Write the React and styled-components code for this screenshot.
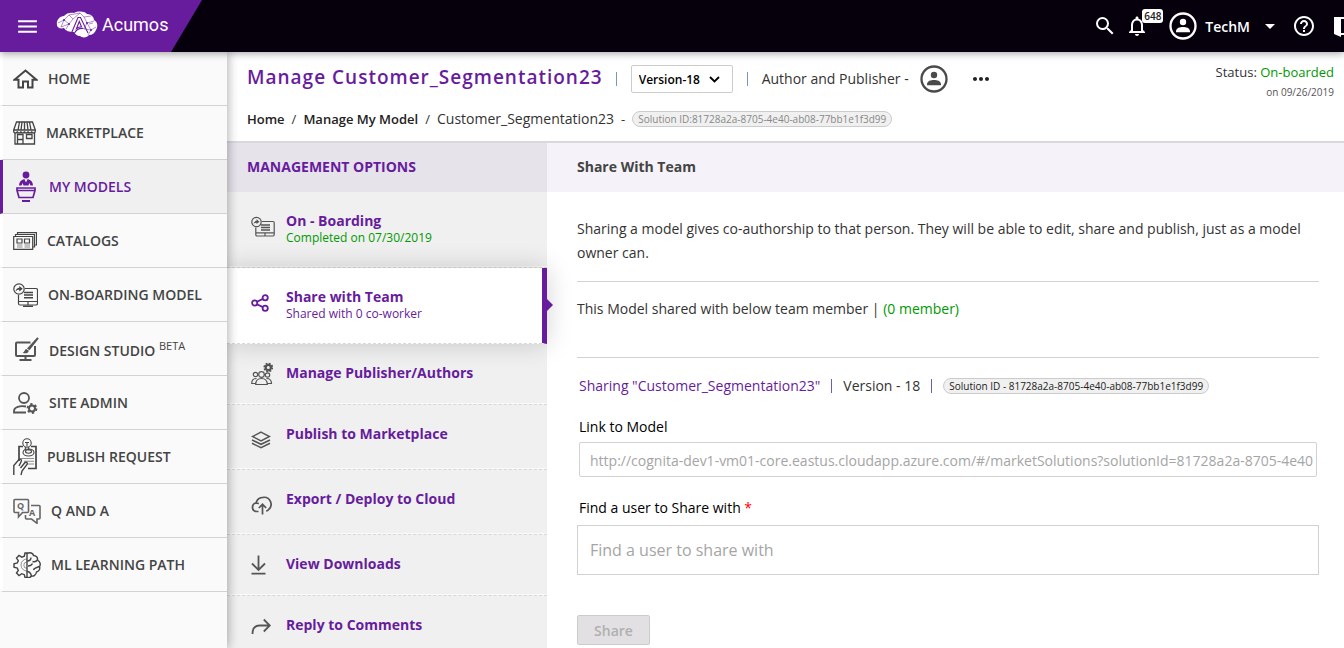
import React from "react";
import styled, { createGlobalStyle, css } from "styled-components";
import {
  MdMenu,
  MdSearch,
  MdNotificationsNone,
  MdArrowDropDown,
  MdHelpOutline,
  MdMoreHoriz,
} from "react-icons/md";

const purple = "#671c9d";
const green = "#009901";
const line = "#d2d2d2";

const GlobalStyle = createGlobalStyle`
  *, *::before, *::after { box-sizing: border-box; }
  body {
    margin: 0;
    background: #fff;
    color: #333;
    font-family: "Open Sans", "Noto Sans", sans-serif;
    font-size: 14px;
    line-height: 20px;
  }
  a { color: inherit; text-decoration: none; }
  ul, ol, h1, h2, p { margin: 0; padding: 0; }
  ul, ol { list-style: none; }
  button, input, select { font-family: inherit; }
  svg { display: block; flex: none; }
`;

const Page = styled.div`
  display: flex;
  flex-direction: column;
  height: 100vh;
  overflow: hidden;
`;

/* ---------- top bar ---------- */

const TopBar = styled.header`
  flex: none;
  display: flex;
  justify-content: space-between;
  height: 52px;
  background: #05000c;
  color: #fff;
  overflow: hidden;
`;

const TopBarShadow = styled.div`
  position: relative;
  z-index: 3;
  flex: none;
  box-shadow: 0 1px 8px rgba(0, 0, 0, 0.4);
`;

const Brand = styled.div`
  display: flex;
  align-items: center;
  gap: 16px;
  width: 202px;
  padding-left: 15px;
  background: ${purple};
  clip-path: polygon(0 0, 100% 0, 171px 100%, 0 100%);
`;

const IconButton = styled.button`
  display: flex;
  align-items: center;
  padding: 0;
  border: 0;
  background: none;
  color: inherit;
`;

const BrandLink = styled.a`
  display: flex;
  align-items: center;
  gap: 4px;
  padding-bottom: 3px;
  font-family: Roboto, sans-serif;
  font-size: 18px;
  line-height: 24px;
`;

const UserTools = styled.nav`
  display: flex;
  align-items: center;
  gap: 8px;
  margin-right: -14px;
`;

const Bell = styled(IconButton)`
  position: relative;
  margin-right: 12px;
`;

const Count = styled.span`
  position: absolute;
  left: 17px;
  top: -5px;
  padding: 0 2px;
  border-radius: 3px;
  background: #fff;
  color: #222;
  font-size: 10px;
  font-weight: 600;
  line-height: 14px;
`;

const UserMenu = styled(IconButton)`
  gap: 8px;
  margin-right: 2px;
  font-size: 14px;
  font-weight: 600;
`;

const Exit = styled(IconButton)`
  margin-left: 10px;
`;

/* ---------- side bar ---------- */

const Shell = styled.div`
  flex: 1;
  display: flex;
  min-height: 0;
`;

const SideBar = styled.nav`
  position: relative;
  z-index: 2;
  flex: none;
  width: 227px;
  background: #fafafa;
  box-shadow: 1px 0 10px rgba(0, 0, 0, 0.32);
`;

const SideLink = styled.a`
  display: flex;
  align-items: center;
  gap: 10px;
  height: 54px;
  padding-left: 10px;
  border-left: 3px solid #fff;
  border-bottom: 1px solid ${line};
  color: #444;
  font-weight: 600;
  ${(p) =>
    p.$active &&
    css`
      background: #f0f0f0;
      border-left-color: ${purple};
      color: ${purple};
    `}
`;

const Beta = styled.sup`
  font-size: 11px;
  font-weight: 400;
  line-height: 20px;
`;

/* ---------- page head ---------- */

const Content = styled.div`
  flex: 1;
  display: flex;
  flex-direction: column;
  min-width: 0;
`;

const PageHead = styled.div`
  flex: none;
  display: flex;
  justify-content: space-between;
  height: 91px;
  padding: 10px 10px 0 20px;
  border-bottom: 2px solid #dad7df;
`;

const TitleRow = styled.div`
  display: flex;
  align-items: center;
  height: 34px;
  gap: 14px;
`;

const Title = styled.h1`
  margin-right: -1px;
  padding-bottom: 4px;
  color: ${purple};
  font-size: 19px;
  font-weight: 600;
  letter-spacing: 1px;
  line-height: 28px;
`;

const Bar = styled.span`
  width: 1px;
  height: 14px;
  background: ${(p) => p.$color || "#7a96c0"};
`;

const SelectBox = styled.div`
  display: grid;
  align-items: center;
  width: 102px;
  & > * { grid-area: 1 / 1; }
  & > svg { justify-self: end; margin-right: 13px; pointer-events: none; }
`;

const VersionSelect = styled.select`
  appearance: none;
  width: 100%;
  height: 28px;
  padding: 0 7px;
  border: 1px solid #ccc;
  border-radius: 2px;
  background: #fff;
  color: #000;
  font-size: 12px;
  font-weight: 600;
`;

const Role = styled.div`
  display: flex;
  align-items: center;
  gap: 11px;
  color: #333;
  & > svg { color: #4a4a4a; }
`;

const More = styled(IconButton)`
  margin-left: 7px;
  color: #222;
`;

const Crumbs = styled.ol`
  display: flex;
  align-items: center;
  gap: 7px;
  margin-top: 13px;
  font-size: 13px;
  color: #333;
  a { font-weight: 600; color: #222; }
`;

const Current = styled.span`
  font-size: 14px;
`;

const Pill = styled.span`
  padding: 0 5px;
  border: 1px solid #ccc;
  border-radius: 8px;
  background: #f0f0f0;
  color: ${(p) => (p.$dark ? "#222" : "#888")};
  font-size: 10px;
  line-height: 14px;
`;

const Status = styled.div`
  text-align: right;
  font-size: 13px;
`;

const Done = styled.span`
  color: ${green};
`;

const StatusDate = styled.div`
  font-size: 10px;
  color: #555;
`;

/* ---------- management options ---------- */

const Columns = styled.div`
  flex: 1;
  display: flex;
  min-height: 0;
`;

const Options = styled.section`
  flex: none;
  width: 320px;
  background: #f0f0f0;
`;

const PanelHead = styled.h2`
  height: 49px;
  padding: 14px 20px 0;
  background: #e6e3ea;
  color: ${purple};
  font-size: 14px;
  font-weight: 700;
  line-height: 20px;
`;

const Option = styled.a`
  position: relative;
  display: flex;
  align-items: flex-start;
  min-height: ${(p) => p.$height}px;
  padding: 19px 0 0 24px;
  border-bottom: 1px dashed #d8d8d8;
  box-shadow: inset 0 -1px 0 #fafafa;
  color: ${purple};
  ${(p) =>
    p.$active &&
    css`
      z-index: 1;
      background: #fff;
      border-right: 5px solid ${purple};
      box-shadow: 0 0 24px rgba(0, 0, 0, 0.18);
      &::after {
        content: "";
        position: absolute;
        right: -11px;
        top: 31px;
        border: 6px solid transparent;
        border-left-color: ${purple};
        border-right: 0;
      }
    `}
`;

const OptionIcon = styled.span`
  display: flex;
  align-items: center;
  flex: none;
  width: 35px;
  height: ${(p) => (p.$tall ? 32 : 22)}px;
  color: ${(p) => (p.$active ? purple : "#555")};
`;

const OptionText = styled.span`
  display: flex;
  flex-direction: column;
  font-weight: 700;
`;

const Note = styled.span`
  color: ${(p) => (p.$done ? green : purple)};
  font-size: 12px;
  font-weight: 400;
  line-height: 14px;
`;

/* ---------- share panel ---------- */

const Share = styled.main`
  flex: 1;
  min-width: 0;
`;

const ShareHead = styled(PanelHead)`
  padding-left: 30px;
  background: #f5f2fa;
  color: #444;
`;

const ShareBody = styled.form`
  padding: 25px 25px 0 30px;
`;

const Block = styled.p`
  min-height: ${(p) => p.$height || 0}px;
  padding-bottom: 16px;
  border-bottom: 1px solid ${line};
  line-height: 24px;
`;

const Members = styled(Block)`
  padding-top: 15px;
`;

const Sharing = styled.div`
  display: flex;
  align-items: center;
  gap: 11px;
  margin: 18px 2px 0;
`;

const SharingName = styled.span`
  color: ${purple};
`;

const Field = styled.div`
  display: flex;
  flex-direction: column;
  margin: ${(p) => (p.$inset ? "21px 2px 0" : "21px 0 0")};
`;

const Label = styled.label`
  padding-left: ${(p) => p.$indent || 0}px;
  color: #000;
`;

const Required = styled.span`
  color: red;
`;

const TextInput = styled.input`
  width: 100%;
  height: ${(p) => (p.$large ? 50 : 35)}px;
  margin-top: ${(p) => (p.$large ? 7 : 5)}px;
  padding: ${(p) => (p.$large ? "0 12px" : "2px 3px 0 10px")};
  border: 1px solid ${line};
  border-radius: ${(p) => (p.$large ? 0 : 2)}px;
  background: #fff;
  color: #a5a5a5;
  font-size: ${(p) => (p.$large ? 16 : 14)}px;
  &::placeholder { color: #a5a5a5; opacity: 1; }
`;

const ShareButton = styled.button`
  width: 73px;
  height: 30px;
  margin-top: 40px;
  padding: 0;
  border: 1px solid #ccc;
  border-radius: 2px;
  background: #e2e0e2;
  color: #b0b0b0;
  font-size: 14px;
  font-weight: 600;
`;

/* ---------- drawings ---------- */

function Svg({ w, h, sw = 1.5, children, ...rest }) {
  return (
    <svg
      width={w}
      height={h}
      viewBox={`0 0 ${w} ${h}`}
      fill="none"
      stroke="currentColor"
      strokeWidth={sw}
      aria-hidden="true"
      {...rest}
    >
      {children}
    </svg>
  );
}

const BrainLogo = () => (
  <Svg w={42} h={28} sw={0.5} stroke={purple}>
    <path
      fill="#fff"
      stroke="none"
      d="M1 14C0 9 4 5 8 5 10 2 15 1 18 2 22 0 28 0 31 3 35 3 38 6 38 9 42 11 42 16 40 19 39 22 36 24 33 24 31 27 26 27 24 25 21 25 19 23 18 21 13 21 10 20 8 17 5 18 1 17 1 14Z"
    />
    <path d="M2 12 8 9 13 4 17 8 13 13 8 9M5 16 13 13 10 18M17 8 24 2 28 6 35 5M28 6 31 12 38 10M31 12 35 19 40 16M35 19 32 24M13 4 24 2M31 12 28 18 35 19M8 9 5 16M33 13 37 12" />
    <path
      strokeWidth="1.100"
      d="M15.500 22 22 6.500h2.500L32 22M18.500 22c2-3.500 5-5 9-4.500M20.500 17.500c1.500-1 3-1.600 5-1.800L23.300 10.500z"
    />
    <circle cx="13" cy="13" r="1" fill={purple} stroke="none" />
    <circle cx="8" cy="9" r="1" fill={purple} stroke="none" />
    <circle cx="31" cy="12" r="1" fill={purple} stroke="none" />
    <circle cx="35" cy="19" r="1" fill={purple} stroke="none" />
  </Svg>
);

const Avatar = () => (
  <Svg w={28} h={28} sw={2.300}>
    <circle cx="14" cy="14" r="12.500" />
    <g fill="currentColor" stroke="none">
      <circle cx="14" cy="10" r="3.200" />
      <path d="M7 19.500C7 15.800 11 15 14 15s7 .8 7 4.500v.8H7z" />
    </g>
  </Svg>
);

const DoorIcon = () => (
  <Svg w={24} h={24} sw={2}>
    <path fill="currentColor" stroke="none" d="M0 3 7 4.500V23L0 20z" />
    <path d="M0 4h16v16H7" />
  </Svg>
);

const HomeIcon = () => (
  <Svg w={25} h={20} sw={2}>
    <path d="M1.500 10.800 12.500 1.500l11 9.300H19.500V18.500H15v-6h-5v6H5.500v-7.700z" />
  </Svg>
);

const StoreIcon = () => (
  <Svg w={23} h={24} sw={1.300}>
    <path d="M3.500 1h16l2.800 8H.7zM6.500 1 5 9M9 1 8 9M11.500 1v8M14 1l1 8M16.500 1 18 9" />
    <path d="M.7 9v1.200a1.800 1.800 0 0 0 3.600 0 1.800 1.800 0 0 0 3.600 0 1.800 1.800 0 0 0 3.600 0 1.800 1.800 0 0 0 3.600 0 1.800 1.800 0 0 0 3.600 0 1.800 1.800 0 0 0 3.600 0V9" />
    <path d="M2 12v11h19.500V12M4.500 23v-9.500h5.500V23M4.500 18.500h5.500M13.500 13.500h5.500v4h-5.500z" />
  </Svg>
);

const PodiumIcon = () => (
  <Svg w={26} h={32} sw={2}>
    <circle cx="13" cy="4" r="3.400" fill="currentColor" stroke="none" />
    <path
      fill="currentColor"
      stroke="none"
      d="M6 14.500C6 11 8 9 11.300 8L13 11.500 14.700 8C18 9 20 11 20 14.500h-2.500l-1.300-2.500-.6 2.500h-5.200L9.800 12l-1.300 2.500z"
    />
    <path d="M4 17h18v2.500l-2 7H6l-2-7zM4.500 19.500h17" strokeWidth="1.700" />
    <path d="M9 30h8" />
  </Svg>
);

const CatalogIcon = () => (
  <Svg w={24} h={18} sw={1.200}>
    <path d="M.7 4.500h19v12.800H.7zM2.500 4.500V2.500h19v12.500h-1.700M4.500 2.500V.7h19v12.300h-2" />
    <path d="M4 7h5v4H4zM11.500 7h5v4h-5z" />
    <path d="M4 13h5.500M11.500 13H17M4 15h5.500M11.500 15H17" opacity=".6" />
  </Svg>
);

const OnboardIcon = () => (
  <Svg w={25} h={24} sw={1.200}>
    <circle cx="6" cy="6" r="5.200" />
    <path
      fill="currentColor"
      stroke="none"
      d="M2.500 8.500C3 6 4.500 5 6.300 4.800V3l3.500 2.700L6.300 8.500V6.800C5 6.800 3.600 7.200 2.500 8.500z"
    />
    <path d="M12 5.500h11a1.500 1.500 0 0 1 1.500 1.500v13.500a1.500 1.500 0 0 1-1.500 1.500H7a1.500 1.500 0 0 1-1.500-1.500V12M5.500 18.500h19M15 18.500V22M10 23.300h10" />
    <path d="M11 9.500h9M11 12h9M11 14.800h9" strokeWidth="1.500" />
  </Svg>
);

const DesignIcon = () => (
  <Svg w={26} h={24} sw={2} color="#555">
    <path d="M17.500 5.500H4a1 1 0 0 0-1 1V18a1 1 0 0 0 1 1h17a1 1 0 0 0 1-1V9M12.500 19v3.500M6.500 23h12" />
    <path
      fill="currentColor"
      stroke="none"
      d="m24.300.3 1.500 1.200-9.300 11.700-2.500-1.800zM13.300 12l2.500 1.800c-.6 2.700-3.500 3-6.300 2 2.300-.6 1.800-3 3.800-3.800z"
    />
  </Svg>
);

const AdminIcon = () => (
  <Svg w={26} h={22} sw={1.800} color="#555">
    <circle cx="11" cy="6" r="5" />
    <path d="M13 14.500c-6-1.200-12 .5-12 4.500v1.500h12" />
    <circle cx="19" cy="16.500" r="3" strokeWidth="2" />
    <circle cx="19" cy="16.500" r="4.500" strokeWidth="1.800" strokeDasharray="2.300 2.400" />
  </Svg>
);

const PublishIcon = () => (
  <Svg w={24} h={38} sw={1.100}>
    <path strokeWidth="1.700" d="M10 8.500H6V23M18 8.500h5v22h-8" />
    <circle cx="14" cy="5" r="4.200" />
    <path d="M12.300 9v3.500M15.700 9v3.500M12 4.500h4M14 4.500v4" />
    <ellipse cx="15.500" cy="14.500" rx="5.500" ry="3.500" />
    <ellipse cx="15.500" cy="13.500" rx="3" ry="1.700" />
    <path d="M8 20.500h13M11 23.200h10M14 26h7" opacity=".6" />
    <path
      strokeWidth="1.400"
      d="M.8 37V27.500L6 21.500c1.500-1.200 3 .3 2.200 2L6 28M8 37l1-4 5-6.500c1-2-1-3-2.200-1.700L7.500 30"
    />
  </Svg>
);

const SmallLetter = styled.text`
  font-family: "Open Sans", sans-serif;
  font-size: 9px;
  font-weight: 700;
  fill: currentColor;
  stroke: none;
`;

const QandAIcon = () => (
  <Svg w={28} h={26} sw={1.600} color="#666">
    <path d="M2 1.500h12.500a1 1 0 0 1 1 1V13.500a1 1 0 0 1-1 1H9.500L5.500 19V14.500H2a1 1 0 0 1-1-1V2.500a1 1 0 0 1 1-1z" />
    <path d="M18 7.500h8a1 1 0 0 1 1 1V20a1 1 0 0 1-1 1h-2v4.300L18.500 21H13.500a1 1 0 0 1-1-1v-3" />
    <SmallLetter x="4" y="11">Q</SmallLetter>
    <SmallLetter x="16" y="18">A</SmallLetter>
  </Svg>
);

const LearningIcon = () => (
  <Svg w={28} h={26} sw={1.400}>
    <path d="M14 1h-2l-.7 3.200-2.500 1L6 3.500 3.500 6l1.800 2.700-1 2.300L1 11.700v3.600l3.300.7 1 2.400L3.500 21 6 23.500l2.800-1.800 2.500 1L12 25.500h2z" />
    <path d="M14 7a6 6 0 0 0 0 12M14 10a3.200 3.200 0 0 0 0 6.400" strokeWidth="0.800" opacity=".7" />
    <path d="M14 1.500c3-1.500 6-.5 6.500 2 2.500 0 4.500 2 4 4.500 2.500 1.500 3.500 4.500 2 6.500.8 2.500-.5 5-3 5.500-.5 3-3 4.500-5 4-1.500 1.800-3.500 1.800-4.500 1" />
    <path d="M14 9c2.500 0 4-1.200 4-3.500M24.500 8c-1 1.500-3 2-5 1.500M15 14c2 0 3.500-.5 4.500-2.500M26.500 14.500c-2 1-5.500 1-6 3.500M14 19.500c2 0 3.500.5 4.500 4.500" />
  </Svg>
);

const OptOnboardIcon = () => (
  <Svg w={24} h={22} sw={1.200}>
    <circle cx="5.500" cy="6" r="4.700" />
    <path
      fill="currentColor"
      stroke="none"
      d="M2.500 8C3 6 4 5 5.500 4.800V3.300l3 2.400-3 2.400V6.700C4.500 6.700 3.500 7 2.500 8z"
    />
    <path d="M11 5.500h11a1.200 1.200 0 0 1 1.200 1.200V18.800A1.200 1.200 0 0 1 22 20H6a1.200 1.200 0 0 1-1.200-1.200V11.500M4.800 16.800h18.400M14 16.800V20" />
    <path d="M10 9h9M10 11.500h9M10 14h9" strokeWidth="1.500" />
  </Svg>
);

const ShareIcon = () => (
  <Svg w={18} h={18} sw={1.800}>
    <circle cx="3.700" cy="9" r="2.600" />
    <circle cx="14.200" cy="3.700" r="2.600" />
    <circle cx="14.200" cy="14.300" r="2.600" />
    <path d="m6 7.800 5.900-2.900M6 10.200l5.900 2.900" />
  </Svg>
);

const AuthorsIcon = () => (
  <Svg w={22} h={24} sw={1.200}>
    <circle cx="17.300" cy="5.500" r="2.600" strokeWidth="2.200" />
    <circle cx="17.300" cy="5.500" r="4" strokeWidth="1.800" strokeDasharray="1.800 1.340" />
    <circle cx="4.500" cy="12.500" r="2.200" />
    <circle cx="16.500" cy="13" r="2.200" />
    <circle cx="10.500" cy="12.500" r="2.800" />
    <path d="M4.700 22.500c0-4 2-6 5.800-6s5.800 2 5.800 6zM4.500 21.500H.7c0-3.500 1.300-5 4.800-5M16.500 21.500h4c0-3.500-1.500-5-5-5" />
  </Svg>
);

const LayersIcon = () => (
  <Svg w={20} h={18} sw={1.500}>
    <path d="M10 1.200 18.500 5.500 10 9.800 1.500 5.500zM1 9l9 4.300L19 9M1 12.300l9 4.300 9-4.300" />
  </Svg>
);

const CloudIcon = () => (
  <Svg w={21} h={19} sw={1.700}>
    <path d="M7.500 15.500H5.300A4.300 4.300 0 0 1 5 7C6 3.500 8.500 1.300 12.300 1.300a7 7 0 0 1 5 12.500 7 7 0 0 1-2 1.300M5 7c1.200 0 2 .2 2.800.7" />
    <path d="M11.500 18.500V9M7.800 12l3.700-3.700L15.200 12" />
  </Svg>
);

const DownloadIcon = () => (
  <Svg w={15} h={20} sw={1.800}>
    <path d="M7.500.500v14M1 8.500l6.500 6.500L14 8.500M.500 18.700h14" />
  </Svg>
);

const ReplyIcon = () => (
  <Svg w={20} h={17} sw={1.800}>
    <path d="M1.500 16c0-6 2.500-8.500 7-8.500H18M12.800 1.500l6 6-6 6" />
  </Svg>
);

const ChevronIcon = () => (
  <Svg w={11} h={7} sw={1.800} color="#000">
    <path d="m1 1 4.500 4.500L10 1" />
  </Svg>
);

/* ---------- data ---------- */

const sideLinks = [
  { text: "HOME", icon: HomeIcon },
  { text: "MARKETPLACE", icon: StoreIcon },
  { text: "MY MODELS", icon: PodiumIcon, active: true },
  { text: "CATALOGS", icon: CatalogIcon },
  { text: "ON-BOARDING MODEL", icon: OnboardIcon },
  { text: "DESIGN STUDIO", icon: DesignIcon, beta: true },
  { text: "SITE ADMIN", icon: AdminIcon },
  { text: "PUBLISH REQUEST", icon: PublishIcon },
  { text: "Q AND A", icon: QandAIcon },
  { text: "ML LEARNING PATH", icon: LearningIcon },
];

const options = [
  { text: "On - Boarding", note: "Completed on 07/30/2019", done: true, icon: OptOnboardIcon, height: 76, tall: true },
  { text: "Share with Team", note: "Shared with 0 co-worker", active: true, icon: ShareIcon, height: 76, tall: true },
  { text: "Manage Publisher/Authors", icon: AuthorsIcon, height: 61 },
  { text: "Publish to Marketplace", icon: LayersIcon, height: 65, tall: true },
  { text: "Export / Deploy to Cloud", icon: CloudIcon, height: 65, tall: true },
  { text: "View Downloads", icon: DownloadIcon, height: 61 },
  { text: "Reply to Comments", icon: ReplyIcon, height: 61 },
];

const modelLink =
  "http://cognita-dev1-vm01-core.eastus.cloudapp.azure.com/#/marketSolutions?solutionId=81728a2a-8705-4e40-ab08-77bb1e1f3d99";

export default function App() {
  return (
    <Page>
      <GlobalStyle />
      <TopBarShadow>
        <TopBar>
          <Brand>
            <IconButton aria-label="Menu">
              <MdMenu size={25} />
            </IconButton>
            <BrandLink href="#">
              <BrainLogo />
              Acumos
            </BrandLink>
          </Brand>
          <UserTools>
            <IconButton aria-label="Search">
              <MdSearch size={24} />
            </IconButton>
            <Bell aria-label="Notifications">
              <MdNotificationsNone size={24} />
              <Count>648</Count>
            </Bell>
            <UserMenu>
              <Avatar />
              TechM
              <MdArrowDropDown size={24} />
            </UserMenu>
            <IconButton aria-label="Help">
              <MdHelpOutline size={24} />
            </IconButton>
            <Exit aria-label="Log out">
              <DoorIcon />
            </Exit>
          </UserTools>
        </TopBar>
      </TopBarShadow>
      <Shell>
        <SideBar>
          {sideLinks.map(({ text, icon: Icon, active, beta }) => (
            <SideLink href="#" key={text} $active={active}>
              <Icon />
              <span>
                {text} {beta && <Beta>BETA</Beta>}
              </span>
            </SideLink>
          ))}
        </SideBar>
        <Content>
          <PageHead>
            <div>
              <TitleRow>
                <Title>Manage Customer_Segmentation23</Title>
                <Bar />
                <SelectBox>
                  <VersionSelect aria-label="Version">
                    <option>Version-18</option>
                  </VersionSelect>
                  <ChevronIcon />
                </SelectBox>
                <Bar />
                <Role>
                  Author and Publisher -
                  <Avatar />
                </Role>
                <More aria-label="More">
                  <MdMoreHoriz size={24} />
                </More>
              </TitleRow>
              <Crumbs>
                <li><a href="#">Home</a></li>
                <li>/</li>
                <li><a href="#">Manage My Model</a></li>
                <li>/</li>
                <li><Current>Customer_Segmentation23</Current></li>
                <li>-</li>
                <Pill as="li">Solution ID:81728a2a-8705-4e40-ab08-77bb1e1f3d99</Pill>
              </Crumbs>
            </div>
            <Status>
              Status: <Done>On-boarded</Done>
              <StatusDate>on 09/26/2019</StatusDate>
            </Status>
          </PageHead>
          <Columns>
            <Options>
              <PanelHead>MANAGEMENT OPTIONS</PanelHead>
              {options.map(({ text, note, done, active, icon: Icon, height, tall }) => (
                <Option href="#" key={text} $active={active} $height={height}>
                  <OptionIcon $tall={tall} $active={active}>
                    <Icon />
                  </OptionIcon>
                  <OptionText>
                    {text}
                    {note && <Note $done={done}>{note}</Note>}
                  </OptionText>
                </Option>
              ))}
            </Options>
            <Share>
              <ShareHead>Share With Team</ShareHead>
              <ShareBody onSubmit={(e) => e.preventDefault()}>
                <Block>
                  Sharing a model gives co-authorship to that person. They will be able to
                  edit, share and publish, just as a model owner can.
                </Block>
                <Members $height={76}>
                  This Model shared with below team member | <Done>(0 member)</Done>
                </Members>
                <Sharing>
                  <SharingName>Sharing "Customer_Segmentation23"</SharingName>
                  <Bar $color="#6a5fb0" />
                  <span>Version - 18</span>
                  <Bar $color="#6a5fb0" />
                  <Pill $dark>Solution ID - 81728a2a-8705-4e40-ab08-77bb1e1f3d99</Pill>
                </Sharing>
                <Field $inset>
                  <Label htmlFor="model-link">Link to Model</Label>
                  <TextInput id="model-link" readOnly value={modelLink} />
                </Field>
                <Field>
                  <Label htmlFor="share-user" $indent={2}>
                    Find a user to Share with <Required>*</Required>
                  </Label>
                  <TextInput id="share-user" $large placeholder="Find a user to share with" />
                </Field>
                <ShareButton disabled>Share</ShareButton>
              </ShareBody>
            </Share>
          </Columns>
        </Content>
      </Shell>
    </Page>
  );
}
